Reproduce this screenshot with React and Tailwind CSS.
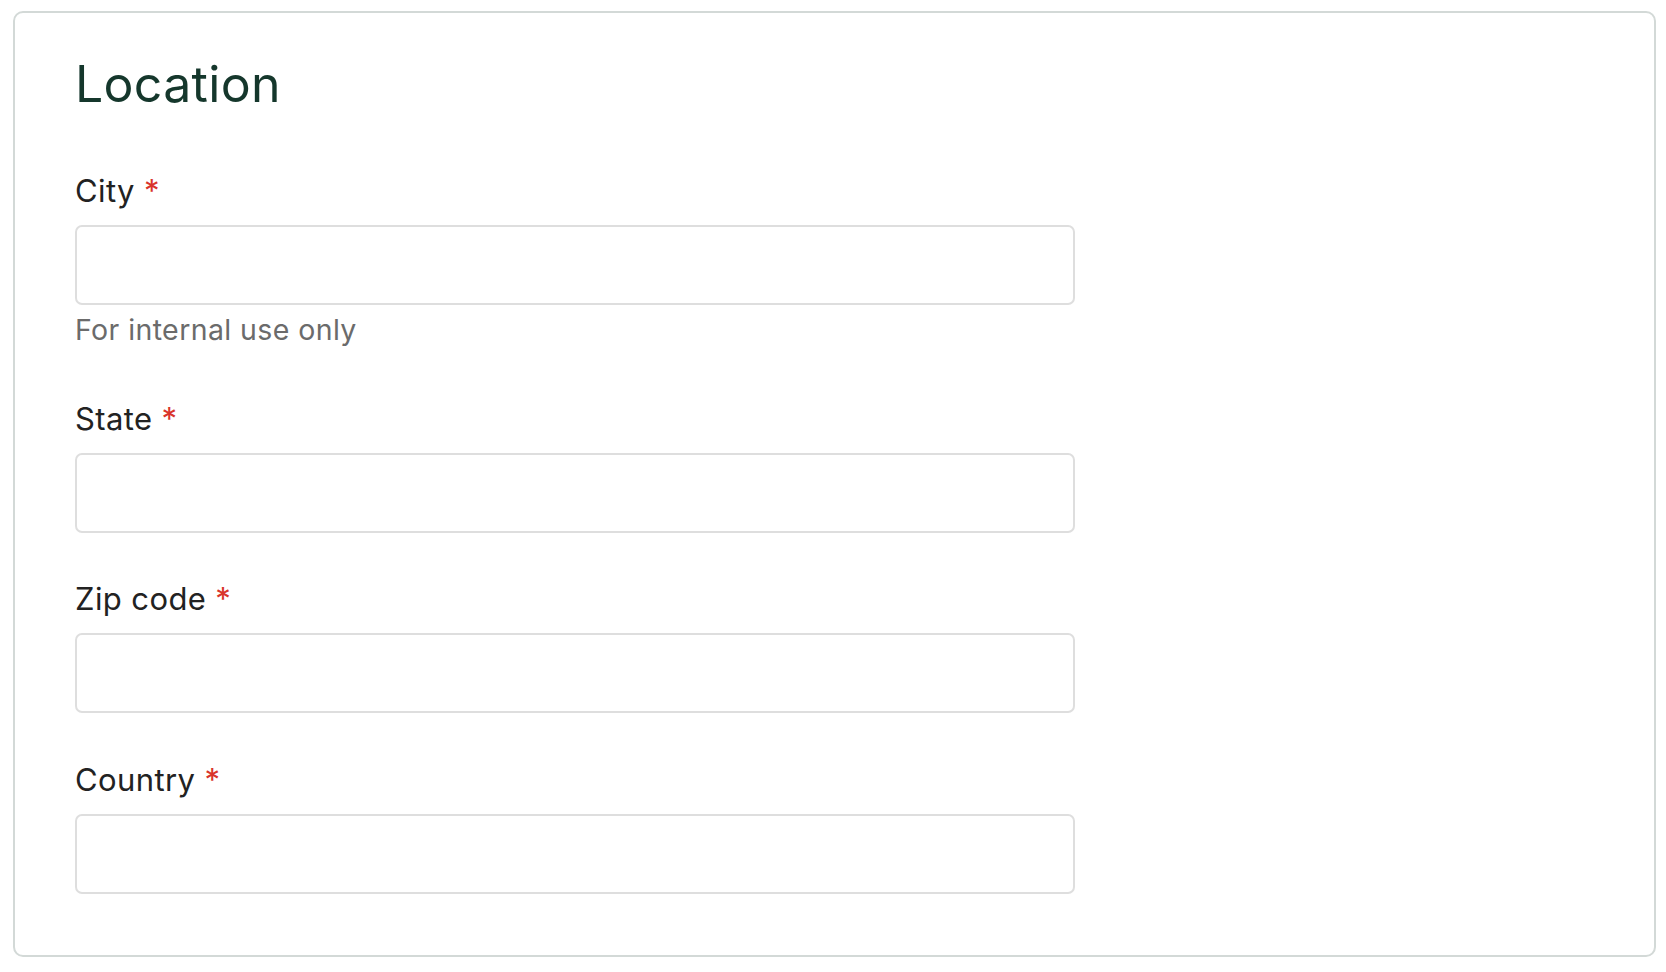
import React from "react";

function Field({ label, helper }) {
  return (
    <div className="flex flex-col">
      <label className="text-[31px] leading-[36px] tracking-[0.4px] text-[#222222] mb-[16px]">
        {label}
        <span className="text-[#d9342b] ml-[9px]">*</span>
      </label>
      <input
        type="text"
        className="w-[1000px] h-[80px] border-2 border-[#dedede] rounded-[7px] bg-white outline-none"
      />
      {helper && (
        <p className="text-[28.5px] leading-[32px] tracking-[0.4px] text-[#6b6b6b] mt-[9px]">{helper}</p>
      )}
    </div>
  );
}

export default function App() {
  return (
    <div
      className="w-[1666px] h-[972px] bg-white pt-[11px] pl-[13px]"
      style={{ fontFamily: "Inter, 'Noto Sans', sans-serif" }}
    >
      <div className="w-[1643px] h-[946px] border-2 border-[#d3d9d7] rounded-[10px] pl-[60px] pt-[43px]">
        <h2 className="text-[50px] leading-[56px] tracking-[0.3px] text-[#15372c] font-normal">Location</h2>
        <div className="flex flex-col mt-[61px]">
          <Field label="City" helper="For internal use only" />
          <div className="mt-[55px]">
            <Field label="State" />
          </div>
          <div className="mt-[48px]">
            <Field label="Zip code" />
          </div>
          <div className="mt-[49px]">
            <Field label="Country" />
          </div>
        </div>
      </div>
    </div>
  );
}
